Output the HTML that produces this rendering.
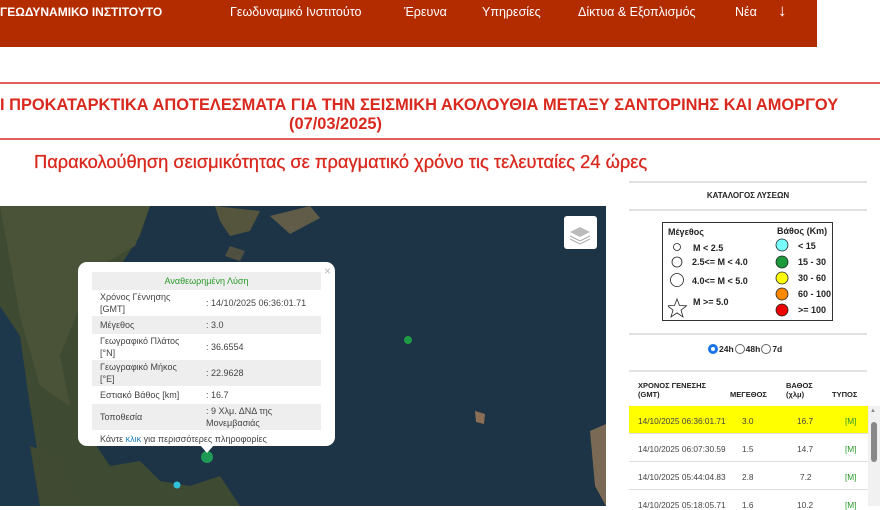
<!DOCTYPE html>
<html><head><meta charset="utf-8"><style>
*{margin:0;padding:0;box-sizing:border-box}
body{width:880px;height:506px;overflow:hidden;background:#fff;font-family:"Liberation Sans",sans-serif;position:relative}
.abs{position:absolute}
.hdr{left:0;top:0;width:817px;height:47px;background:#b22c00;color:#fff}
.hdr span{position:absolute;top:5px;font-size:12.5px}
.rl{left:0;width:880px;height:2px;background:#e06060}
.t{color:#d9281e;font-weight:bold;font-size:16.4px;white-space:nowrap}
.pop{left:78px;top:262px;width:257px;height:184px;background:#fff;border-radius:9px;font-size:9px;color:#444}
.pop table{position:absolute;left:14px;top:10px;width:229px;border-collapse:collapse}
.pop td{padding:1px 6px;line-height:12px;vertical-align:middle}
.pop tr.g td{background:#eee}
.lg{left:662px;top:222px;width:171px;height:99px;border:1px solid #333;font-size:9px;font-weight:bold;color:#222}
.ln{left:629px;width:238px;height:2px;background:#e2e2e2}
.row{left:629px;width:239px;height:28px;font-size:8.3px;color:#444;border-bottom:1px solid #ddd}
.row span{position:absolute;top:10px}
</style></head><body>
<div class="abs hdr">
<span style="left:0;font-weight:bold;font-size:12px">ΓΕΩΔΥΝΑΜΙΚΟ ΙΝΣΤΙΤΟΥΤΟ</span>
<span style="left:230px">Γεωδυναμικό Ινστιτούτο</span>
<span style="left:404px">Έρευνα</span>
<span style="left:482px">Υπηρεσίες</span>
<span style="left:578px">Δίκτυα &amp; Εξοπλισμός</span>
<span style="left:735px">Νέα</span>
<span style="left:778px;font-size:17px;top:1px">↓</span>
</div>
<div class="abs rl" style="top:82px"></div>
<div class="abs rl" style="top:138px"></div>
<div class="abs t" style="left:0;top:96px">Ι ΠΡΟΚΑΤΑΡΚΤΙΚΑ ΑΠΟΤΕΛΕΣΜΑΤΑ ΓΙΑ ΤΗΝ ΣΕΙΣΜΙΚΗ ΑΚΟΛΟΥΘΙΑ ΜΕΤΑΞΥ ΣΑΝΤΟΡΙΝΗΣ ΚΑΙ ΑΜΟΡΓΟΥ</div>
<div class="abs t" style="left:289px;top:115px">(07/03/2025)</div>
<div class="abs t" style="left:34px;top:151px;font-weight:normal;font-size:18.3px;-webkit-text-stroke:0.3px #d9281e">Παρακολούθηση σεισμικότητας σε πραγματικό χρόνο τις τελευταίες 24 ώρες</div>

<svg class="abs" style="left:0;top:206px" width="606" height="300">
<rect width="606" height="300" fill="#1c3446"/>
<polygon points="0,0 150,0 140,30 120,60 110,90 85,130 78,180 90,230 110,260 140,255 160,275 190,280 220,270 240,300 0,300" fill="#3f4a32"/>
<polygon points="0,0 150,0 135,40 100,60 80,100 60,150 70,200 40,180 20,110" fill="#4a5238"/>
<polygon points="0,100 20,130 30,200 40,260 50,300 0,300" fill="#1e384b"/>
<polygon points="30,240 60,250 80,300 40,300" fill="#404a33"/>
<polygon points="215,0 260,5 250,25 230,30 220,15" fill="#55553d"/>
<polygon points="270,10 310,0 320,12 290,28" fill="#605c48"/>
<polygon points="230,40 245,45 240,55 225,50" fill="#505040"/>
<polygon points="475,205 485,208 484,218 476,216" fill="#8a6e55"/>
<polygon points="590,225 606,218 606,300 595,280" fill="#7a6a55"/>
<rect x="564" y="10" width="33" height="33" rx="3" fill="#fff"/>
<path d="M570 26l10-5 10 5-10 5z" fill="#bbb"/><path d="M570 30l10 5 10-5" stroke="#aaa" fill="none"/><path d="M570 33l10 5 10-5" stroke="#aaa" fill="none"/>
<circle cx="408" cy="134" r="4" fill="#1f9a44"/>
<circle cx="177" cy="279" r="3.5" fill="#30c2d8"/>
<circle cx="207" cy="251" r="6" fill="#1f9a55"/>
<polygon points="200,239 207,247 214,239" fill="#fff"/>
</svg>
<div class="abs pop">
<div class="abs" style="right:4px;top:2px;color:#bbb;font-size:12px">×</div>
<table>
<tr class="g"><td colspan="2" style="text-align:center;color:#2a9a2a;padding:3px">Αναθεωρημένη Λύση</td></tr>
<tr><td style="width:108px;padding-left:8px">Χρόνος Γέννησης<br>[GMT]</td><td>: 14/10/2025 06:36:01.71</td></tr>
<tr class="g"><td style="padding:3px 8px">Μέγεθος</td><td>: 3.0</td></tr>
<tr><td style="padding-left:8px">Γεωγραφικό Πλάτος<br>[°N]</td><td>: 36.6554</td></tr>
<tr class="g"><td style="padding-left:8px">Γεωγραφικό Μήκος<br>[°E]</td><td>: 22.9628</td></tr>
<tr><td style="padding:3px 8px">Εστιακό Βάθος [km]</td><td>: 16.7</td></tr>
<tr class="g"><td style="padding-left:8px">Τοποθεσία</td><td>: 9 Χλμ. ΔΝΔ της<br>Μονεμβασιάς</td></tr>
<tr><td colspan="2" style="padding:3px 8px">Κάντε <span style="color:#1a7fbf">κλικ</span> για περισσότερες πληροφορίες</td></tr>
</table></div>

<div class="abs ln" style="top:181px"></div>
<div class="abs" style="left:629px;width:238px;top:191px;text-align:center;font-size:8px;font-weight:bold;color:#222">ΚΑΤΑΛΟΓΟΣ ΛΥΣΕΩΝ</div>
<div class="abs ln" style="top:209px"></div>
<div class="abs lg">
<div class="abs" style="left:5px;top:4px">Μέγεθος</div>
<svg class="abs" style="left:5px;top:14px" width="80" height="82"><circle cx="9" cy="10" r="3.5" fill="#fff" stroke="#222" stroke-width=".8"/><circle cx="9" cy="25" r="5" fill="#fff" stroke="#222" stroke-width=".8"/><circle cx="9" cy="43" r="6.5" fill="#fff" stroke="#222" stroke-width=".8"/><path d="M9 62l2.5 6.5 7 .3-5.5 4.3 2 6.8-6-4-6 4 2-6.8-5.5-4.3 7-.3z" fill="#fff" stroke="#222" stroke-width=".8"/></svg>
<div class="abs" style="left:30px;top:20px">M &lt; 2.5</div>
<div class="abs" style="left:29px;top:34px">2.5&lt;= M &lt; 4.0</div>
<div class="abs" style="left:29px;top:53px">4.0&lt;= M &lt; 5.0</div>
<div class="abs" style="left:30px;top:74px">M &gt;= 5.0</div>
<div class="abs" style="left:114px;top:3px">Βάθος (Km)</div>
<svg class="abs" style="left:111px;top:14px" width="20" height="84"><g stroke="#222" stroke-width=".8"><circle cx="8" cy="8" r="6" fill="#7ff"/><circle cx="8" cy="25" r="6" fill="#1a9a3a"/><circle cx="8" cy="41" r="6" fill="#ff0"/><circle cx="8" cy="57" r="6" fill="#f80"/><circle cx="8" cy="73" r="6" fill="#e00"/></g></svg>
<div class="abs" style="left:135px;top:18px">&lt; 15</div>
<div class="abs" style="left:135px;top:34px">15 - 30</div>
<div class="abs" style="left:135px;top:50px">30 - 60</div>
<div class="abs" style="left:135px;top:66px">60 - 100</div>
<div class="abs" style="left:135px;top:82px">&gt;= 100</div>
</div>
<div class="abs ln" style="top:333px"></div>
<div class="abs" style="left:708px;top:344px;font-size:8.5px;font-weight:bold;color:#222;display:flex;align-items:center;gap:1px">
<span style="width:10px;height:10px;border-radius:50%;border:3px solid #1a73e8;display:inline-block"></span>24h
<span style="width:10px;height:10px;border-radius:50%;border:1px solid #666;display:inline-block"></span>48h
<span style="width:10px;height:10px;border-radius:50%;border:1px solid #666;display:inline-block"></span>7d</div>
<div class="abs ln" style="top:370px"></div>
<div class="abs" style="left:638px;top:381px;font-size:7.5px;font-weight:bold;color:#222;line-height:9px">ΧΡΟΝΟΣ ΓΕΝΕΣΗΣ<br>(GMT)</div>
<div class="abs" style="left:730px;top:390px;font-size:7.5px;font-weight:bold;color:#222">ΜΕΓΕΘΟΣ</div>
<div class="abs" style="left:786px;top:381px;font-size:7.5px;font-weight:bold;color:#222;line-height:9px">ΒΑΘΟΣ<br>(χλμ)</div>
<div class="abs" style="left:832px;top:390px;font-size:7.5px;font-weight:bold;color:#222">ΤΥΠΟΣ</div>
<div class="abs row" style="top:406px;background:#ff0"><span style="left:9px">14/10/2025 06:36:01.71</span><span style="left:113px">3.0</span><span style="left:168px">16.7</span><span style="left:216px;color:#2a9a2a">[M]</span></div>
<div class="abs row" style="top:434px"><span style="left:9px">14/10/2025 06:07:30.59</span><span style="left:113px">1.5</span><span style="left:168px">14.7</span><span style="left:216px;color:#2a9a2a">[M]</span></div>
<div class="abs row" style="top:462px"><span style="left:9px">14/10/2025 05:44:04.83</span><span style="left:113px">2.8</span><span style="left:171px">7.2</span><span style="left:216px;color:#2a9a2a">[M]</span></div>
<div class="abs row" style="top:490px;height:16px;border:0"><span style="left:9px">14/10/2025 05:18:05.71</span><span style="left:113px">1.6</span><span style="left:168px">10.2</span><span style="left:216px;color:#2a9a2a">[M]</span></div>
<div class="abs" style="left:868px;top:406px;width:12px;height:100px;background:#f1f1f1"></div>
<div class="abs" style="left:871px;top:422px;width:6px;height:40px;background:#888;border-radius:3px"></div>
<div class="abs" style="left:870px;top:408px;font-size:6px;color:#888">▲</div>
</body></html>
